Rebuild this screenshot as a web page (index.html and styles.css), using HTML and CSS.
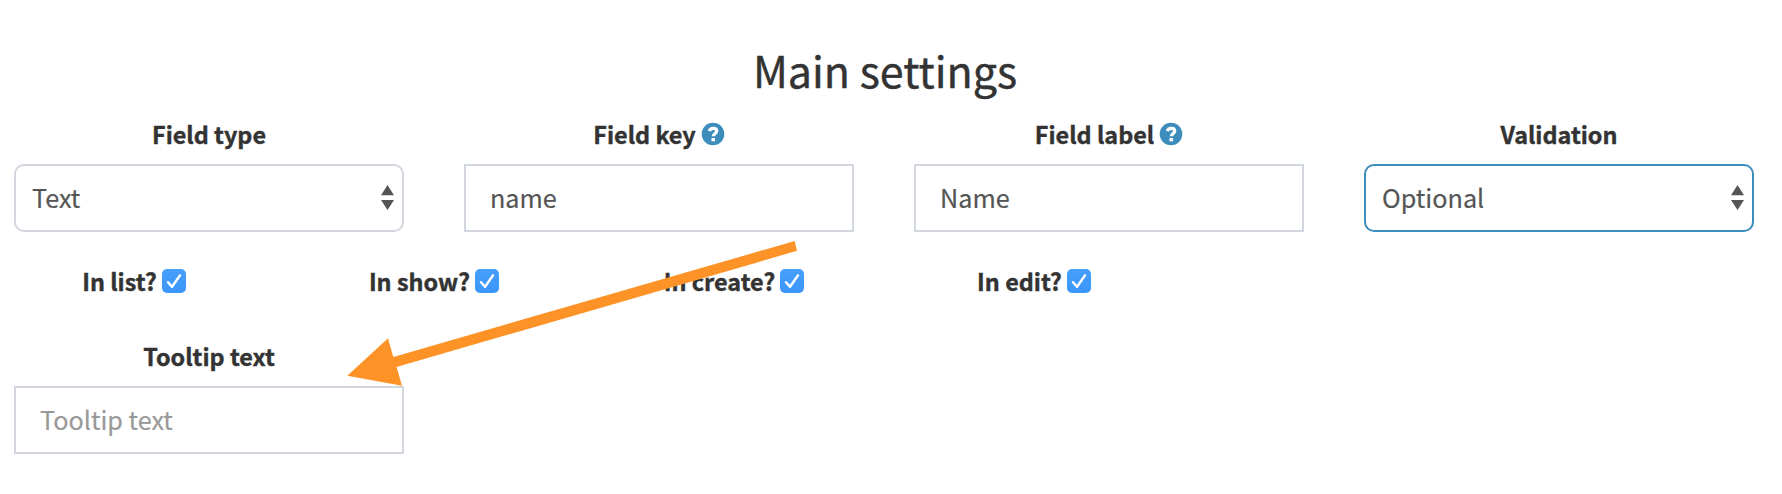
FILE: index.html
```html
<!DOCTYPE html>
<html lang="en">
<head>
    <meta charset="UTF-8" />
    <meta name="viewport" content="width=device-width, initial-scale=1.0" />
    <title>Main settings</title>
    <link rel="stylesheet" href="styles.css">
</head>
<body>

<svg class="symbols" width="0" height="0">
    <symbol id="help" viewBox="0 0 24 24">
        <circle cx="12" cy="12" r="11.3" fill="#3c8dbc"/>
        <path d="M8.4 9.2C8.9 7.2 10.3 6.3 12.2 6.3c2.1 0 3.5 1.1 3.5 2.8 0 2.4-3.3 2.4-3.3 5.2" fill="none" stroke="#fff" stroke-width="3.3"/>
        <rect x="10.5" y="16" width="3.6" height="3.3" fill="#fff"/>
    </symbol>
    <symbol id="check" viewBox="0 0 24 24">
        <path d="M6 13.2l4 4.6L18 6.4" fill="none" stroke="#fff" stroke-width="2.5" stroke-linecap="round" stroke-linejoin="round"/>
    </symbol>
    <symbol id="arrows" viewBox="0 0 13 25">
        <path d="M6.5 0L13 10.3H0zM0 15h13L6.5 25z" fill="#555"/>
    </symbol>
</svg>

<form class="settings">
    <h2>Main settings</h2>

    <div class="row">
        <div class="form-group">
            <label for="type">Field type</label>
            <div class="select">
                <select id="type"><option>Text</option></select>
                <svg><use href="#arrows"/></svg>
            </div>
        </div>
        <div class="form-group">
            <label for="key">Field key <svg class="help"><use href="#help"/></svg></label>
            <input type="text" id="key" value="name"/>
        </div>
        <div class="form-group">
            <label for="label">Field label <svg class="help"><use href="#help"/></svg></label>
            <input type="text" id="label" value="Name"/>
        </div>
        <div class="form-group">
            <label for="validation">Validation</label>
            <div class="select active">
                <select id="validation"><option>Optional</option></select>
                <svg><use href="#arrows"/></svg>
            </div>
        </div>
    </div>

    <div class="checks">
        <label>In list? <svg class="checkbox"><use href="#check"/></svg></label>
        <label>In show? <svg class="checkbox"><use href="#check"/></svg></label>
        <label>In create? <svg class="checkbox"><use href="#check"/></svg></label>
        <label>In edit? <svg class="checkbox"><use href="#check"/></svg></label>
    </div>

    <div class="row">
        <div class="form-group">
            <label for="tooltip">Tooltip text</label>
            <input type="text" id="tooltip" placeholder="Tooltip text"/>
        </div>
    </div>
</form>

<svg class="pointer" viewBox="0 0 452 146">
    <path d="M447.7 0l2.3 9.8L49.6 126l5.4 18.8L.3 134.8 41 97.3l5.3 18.7z" fill="#fd9327"/>
</svg>

</body>
</html>
```

FILE: styles.css
```css
* {
    box-sizing: border-box;
}

body {
    position: relative;
    margin: 0;
    height: 494px;
    overflow: hidden;
    background: #fff;
    color: #333;
    font-family: "Noto Sans CJK SC", sans-serif;
    font-size: 23.4px;
}

.symbols {
    position: absolute;
}

.settings {
    width: 1740px;
    margin-left: 14px;
    padding-top: 39px;
}

h2 {
    margin: 0 0 12px;
    padding-left: 2px;
    font-size: 43px;
    font-weight: 400;
    line-height: 60px;
    text-align: center;
    -webkit-text-stroke: 0.4px;
}

.row {
    display: grid;
    grid-template-columns: repeat(4, 390px);
    gap: 60px;
}

label {
    display: flex;
    justify-content: center;
    align-items: center;
    gap: 5px;
    height: 40px;
    font-weight: 700;
    line-height: 38px;
    white-space: nowrap;
    -webkit-text-stroke: 0.4px;
}

.form-group label {
    margin: 3px 0 10px;
}

.help {
    width: 24px;
    height: 24px;
}

input,
select {
    display: block;
    width: 390px;
    height: 68px;
    margin: 0;
    padding: 0 24px 2px;
    border: 2px solid #d2d6de;
    border-radius: 0;
    outline: none;
    background: #fff;
    color: #555;
    font-family: inherit;
    font-size: 25.2px;
    appearance: none;
    -webkit-text-stroke: 0.2px;
}

input::placeholder {
    color: #999;
    opacity: 1;
}

.select {
    position: relative;
}

.select select {
    padding: 0 16px 2px;
    border-radius: 10px;
}

.select.active select {
    border-color: #3c8dbc;
}

.select svg {
    position: absolute;
    top: 21px;
    right: 10px;
    width: 13px;
    height: 25px;
}

.checks {
    display: grid;
    grid-template-columns: repeat(4, 240px);
    gap: 60px;
    margin: 29px 0 32px;
}

.checkbox {
    width: 24px;
    height: 24px;
    border-radius: 5px;
    background: linear-gradient(#459ffb, #3b96fa);
}

/* arrow drawn over the form */
.pointer {
    position: absolute;
    top: 241px;
    left: 347px;
    width: 452px;
    height: 146px;
}
```
